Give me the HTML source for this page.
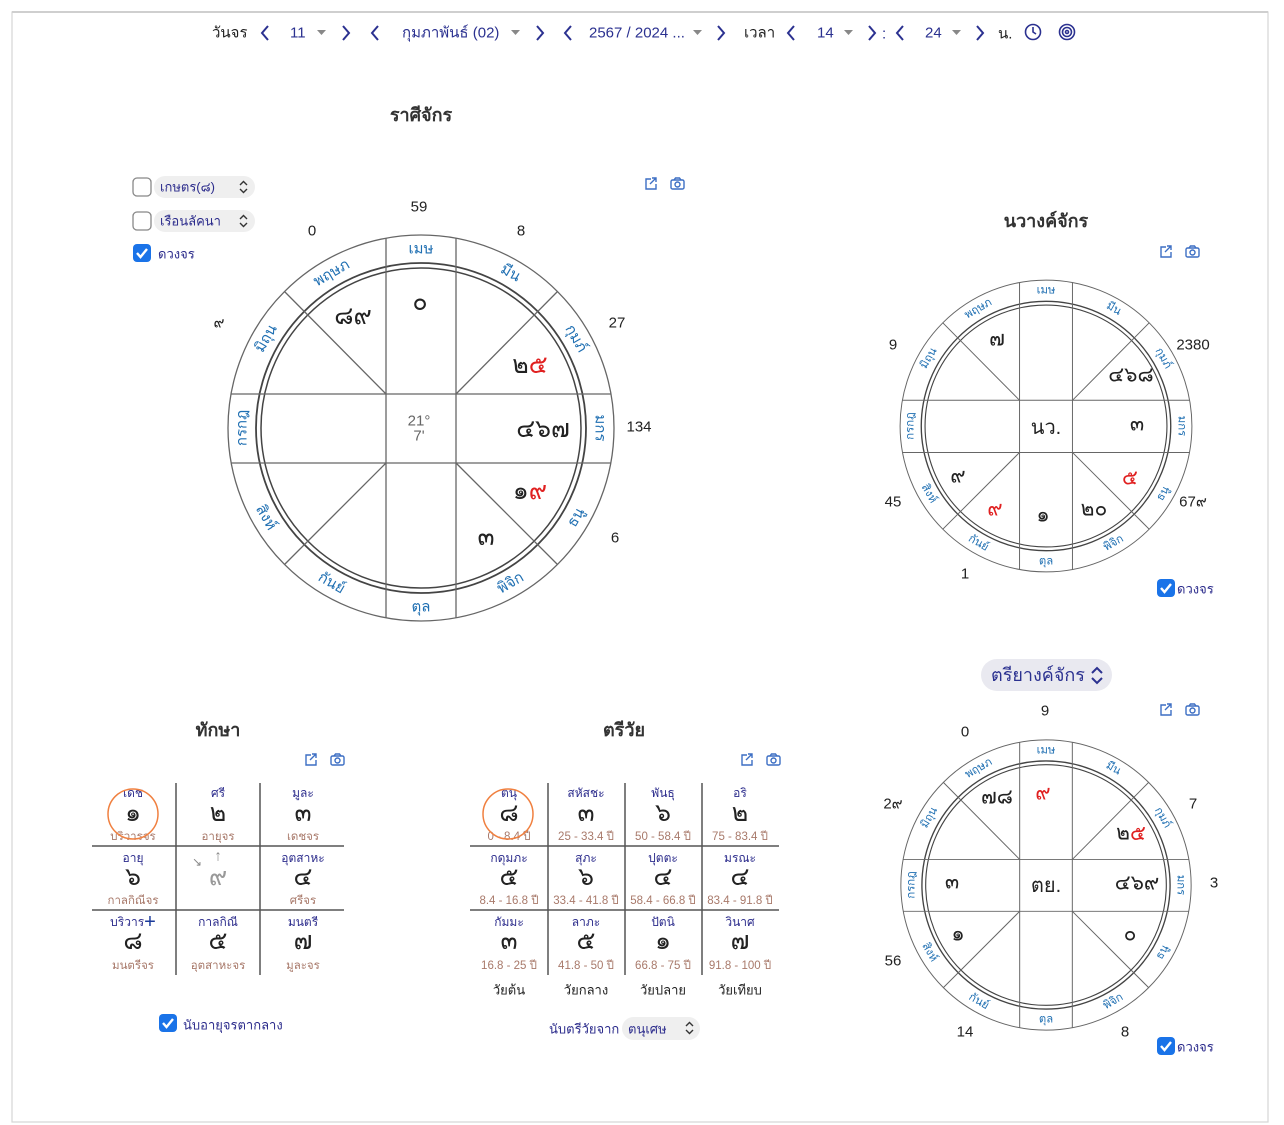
<!DOCTYPE html>
<html><head><meta charset="utf-8">
<style>
html,body{margin:0;padding:0;background:#fff;}
svg{display:block;font-family:"Liberation Sans","DejaVu Sans",sans-serif;}
.sg{font-size:15px;fill:#1f6fb2;text-anchor:middle;dominant-baseline:central}
.n{font-size:15px;fill:#222;text-anchor:middle;dominant-baseline:central}
.p{font-size:25px;fill:#222;text-anchor:middle;dominant-baseline:central}
.s{font-size:21px}
.r{fill:#e02020}
.nav{font-size:15px;fill:#2b3190;dominant-baseline:central}
.blk{fill:#222}
.ttl{font-size:18px;font-weight:bold;fill:#333;text-anchor:middle;dominant-baseline:central}
.lb{font-size:12px;fill:#2c2c8c;text-anchor:middle;dominant-baseline:central}
.bn{font-size:25px;fill:#222;text-anchor:middle;dominant-baseline:central}
.br{font-size:11.5px;fill:#a8796a;text-anchor:middle;dominant-baseline:central}
.ck{font-size:13px;fill:#2c2c8c;dominant-baseline:central}
.ch{fill:none;stroke:#2b3190;stroke-width:2}
</style></head><body>
<svg width="1284" height="1125" viewBox="0 0 1284 1125">
<defs>
<g id="frame" fill="none" stroke="#666" stroke-width="1.3">
<circle r="193"/><circle r="165" stroke="#444" stroke-width="1.8"/><circle r="160" stroke="#444" stroke-width="1.5"/>
<line x1="-35" y1="-190" x2="-35" y2="190"/><line x1="35" y1="-190" x2="35" y2="190"/>
<line x1="-190" y1="-34" x2="190" y2="-34"/><line x1="-190" y1="35" x2="190" y2="35"/>
<line x1="-35" y1="-34" x2="-136.5" y2="-136.5"/><line x1="35" y1="-34" x2="136.5" y2="-136.5"/>
<line x1="-35" y1="35" x2="-136.5" y2="136.5"/><line x1="35" y1="35" x2="136.5" y2="136.5"/>
</g>
<g id="ic" fill="none" stroke="#3d6fc4" stroke-width="1.4">
<path d="M-19 -5 h-5 v10 h10 v-5 M-18 -6 h4 v4 M-14 -6 l-6 6"/>
<rect x="1" y="-4" width="13" height="9" rx="1.5"/><path d="M4 -4 l1.5 -2 h4 l1.5 2"/><circle cx="7.5" cy="0.5" r="2.5"/>
</g>
<g id="cb"><rect x="-9" y="-9" width="18" height="18" rx="4" fill="#1a73e8"/><path d="M-5 0 l3.5 4 l6.5 -8" fill="none" stroke="#fff" stroke-width="2.4"/></g>
</defs>

<rect x="12" y="12" width="1256" height="1110" fill="none" stroke="#d6d6d6" stroke-width="1.2"/>
<line x1="12" y1="12" x2="1268" y2="12" stroke="#cfcfcf" stroke-width="2"/>

<!-- nav -->
<text class="nav blk" x="212" y="33">วันจร</text>
<path class="ch" d="M268 26 l-6 7 l6 7"/>
<text class="nav" x="290" y="33">11</text>
<path d="M317 30 h9 l-4.5 5z" fill="#888"/>
<path class="ch" d="M343 26 l6 7 l-6 7"/>
<path class="ch" d="M378 26 l-6 7 l6 7"/>
<text class="nav" x="402" y="33">กุมภาพันธ์ (02)</text>
<path d="M511 30 h9 l-4.5 5z" fill="#888"/>
<path class="ch" d="M537 26 l6 7 l-6 7"/>
<path class="ch" d="M571 26 l-6 7 l6 7"/>
<text class="nav" x="589" y="33">2567 / 2024 ...</text>
<path d="M693 30 h9 l-4.5 5z" fill="#888"/>
<path class="ch" d="M718 26 l6 7 l-6 7"/>
<text class="nav blk" x="744" y="33">เวลา</text>
<path class="ch" d="M794 26 l-6 7 l6 7"/>
<text class="nav" x="817" y="33">14</text>
<path d="M844 30 h9 l-4.5 5z" fill="#888"/>
<path class="ch" d="M869 26 l6 7 l-6 7"/>
<text class="nav" x="882" y="34">:</text>
<path class="ch" d="M903 26 l-6 7 l6 7"/>
<text class="nav" x="925" y="33">24</text>
<path d="M952 30 h9 l-4.5 5z" fill="#888"/>
<path class="ch" d="M977 26 l6 7 l-6 7"/>
<text class="nav blk" x="998" y="34">น.</text>
<g fill="none" stroke="#2b3190" stroke-width="1.6"><circle cx="1033" cy="32" r="7.5"/><path d="M1033 27 v5 l3 2"/>
<circle cx="1067" cy="32" r="7.5"/><circle cx="1067" cy="32" r="4.5"/><circle cx="1067" cy="32" r="1.5"/></g>

<!-- main chart -->
<text class="ttl" x="421" y="115">ราศีจักร</text>
<rect x="133" y="178" width="18" height="18" rx="4" fill="#fff" stroke="#888" stroke-width="1.3"/>
<rect x="154" y="176" width="101" height="22" rx="11" fill="#efefef"/>
<text class="ck" x="160" y="187">เกษตร(๘)</text>
<path d="M240 185 l3.5 -3.5 l3.5 3.5 M240 189 l3.5 3.5 l3.5 -3.5" fill="none" stroke="#333" stroke-width="1.4"/>
<rect x="133" y="212" width="18" height="18" rx="4" fill="#fff" stroke="#888" stroke-width="1.3"/>
<rect x="154" y="210" width="101" height="22" rx="11" fill="#efefef"/>
<text class="ck" x="160" y="221">เรือนลัคนา</text>
<path d="M240 219 l3.5 -3.5 l3.5 3.5 M240 223 l3.5 3.5 l3.5 -3.5" fill="none" stroke="#333" stroke-width="1.4"/>
<use href="#cb" x="142" y="253"/>
<text class="ck" x="158" y="254">ดวงจร</text>
<use href="#ic" x="670" y="184"/>

<g transform="translate(421,428)">
<use href="#frame"/>
<text class="sg" transform="translate(0,-179)">เมษ</text>
<text class="sg" transform="translate(89.5,-155) rotate(30)">มีน</text>
<text class="sg" transform="translate(155,-89.5) rotate(60)">กุมภ์</text>
<text class="sg" transform="translate(179,0) rotate(90)">มกร</text>
<text class="sg" transform="translate(155,89.5) rotate(-60)">ธนู</text>
<text class="sg" transform="translate(89.5,155) rotate(-30)">พิจิก</text>
<text class="sg" transform="translate(0,179)">ตุล</text>
<text class="sg" transform="translate(-89.5,155) rotate(30)">กันย์</text>
<text class="sg" transform="translate(-155,89.5) rotate(60)">สิงห์</text>
<text class="sg" transform="translate(-179,0) rotate(-90)">กรกฎ</text>
<text class="sg" transform="translate(-155,-89.5) rotate(-60)">มิถุน</text>
<text class="sg" transform="translate(-89.5,-155) rotate(-30)">พฤษภ</text>
</g>
<text class="n" x="419" y="207">59</text><text class="n" x="521" y="231">8</text>
<text class="n" x="617" y="323">27</text><text class="n" x="639" y="427">134</text>
<text class="n" x="615" y="538">6</text><text class="n" x="312" y="231">0</text>
<text class="n" x="219" y="323">๙</text>
<text class="p" x="353" y="316">๘๙</text><text class="p" x="420" y="302">๐</text>
<text class="p" x="530" y="365">๒<tspan class="r">๕</tspan></text>
<text class="p" x="543" y="429">๔๖๗</text>
<text class="p" x="530" y="491">๑<tspan class="r">๙</tspan></text>
<text class="p" x="486" y="537">๓</text>
<text class="n" x="419" y="421" style="fill:#666">21°</text>
<text class="n" x="419" y="436" style="fill:#666">7'</text>

<!-- navang -->
<text class="ttl" x="1046" y="221">นวางค์จักร</text>
<use href="#ic" x="1185" y="252"/>
<g transform="translate(1046,426) scale(0.756)">
<use href="#frame"/>
<text class="sg" transform="translate(0,-179)">เมษ</text>
<text class="sg" transform="translate(89.5,-155) rotate(30)">มีน</text>
<text class="sg" transform="translate(155,-89.5) rotate(60)">กุมภ์</text>
<text class="sg" transform="translate(179,0) rotate(90)">มกร</text>
<text class="sg" transform="translate(155,89.5) rotate(-60)">ธนู</text>
<text class="sg" transform="translate(89.5,155) rotate(-30)">พิจิก</text>
<text class="sg" transform="translate(0,179)">ตุล</text>
<text class="sg" transform="translate(-89.5,155) rotate(30)">กันย์</text>
<text class="sg" transform="translate(-155,89.5) rotate(60)">สิงห์</text>
<text class="sg" transform="translate(-179,0) rotate(-90)">กรกฎ</text>
<text class="sg" transform="translate(-155,-89.5) rotate(-60)">มิถุน</text>
<text class="sg" transform="translate(-89.5,-155) rotate(-30)">พฤษภ</text>
</g>
<text class="n" x="893" y="345">9</text><text class="n" x="1193" y="345">2380</text>
<text class="n" x="893" y="502">45</text><text class="n" x="1193" y="502">67๙</text>
<text class="n" x="965" y="574">1</text>
<text class="p s" x="997" y="339">๗</text>
<text class="p s" x="1131" y="375">๔๖๘</text>
<text class="p s" x="1137" y="424">๓</text>
<text class="p s" style="fill:#e02020" x="1130" y="478">๕</text>
<text class="p s" x="1094" y="509">๒๐</text>
<text class="p s" x="1043" y="515">๑</text>
<text class="p s" style="fill:#e02020" x="995" y="509">๙</text>
<text class="p s" x="958" y="476">๙</text>
<text class="p" style="font-size:20px" x="1046" y="428">นว.</text>
<use href="#cb" x="1166" y="588"/><text class="ck" x="1177" y="589">ดวงจร</text>

<!-- triyang -->
<rect x="981" y="659" width="131" height="32" rx="16" fill="#e9e9f0"/>
<text class="nav" style="font-size:18px" x="991" y="675">ตรียางค์จักร</text>
<path d="M1092 673 l5 -5 l5 5 M1092 678 l5 5 l5 -5" fill="none" stroke="#2b3190" stroke-width="2"/>
<use href="#ic" x="1185" y="710"/>
<g transform="translate(1046,885) scale(0.752)">
<use href="#frame"/>
<text class="sg" transform="translate(0,-179)">เมษ</text>
<text class="sg" transform="translate(89.5,-155) rotate(30)">มีน</text>
<text class="sg" transform="translate(155,-89.5) rotate(60)">กุมภ์</text>
<text class="sg" transform="translate(179,0) rotate(90)">มกร</text>
<text class="sg" transform="translate(155,89.5) rotate(-60)">ธนู</text>
<text class="sg" transform="translate(89.5,155) rotate(-30)">พิจิก</text>
<text class="sg" transform="translate(0,179)">ตุล</text>
<text class="sg" transform="translate(-89.5,155) rotate(30)">กันย์</text>
<text class="sg" transform="translate(-155,89.5) rotate(60)">สิงห์</text>
<text class="sg" transform="translate(-179,0) rotate(-90)">กรกฎ</text>
<text class="sg" transform="translate(-155,-89.5) rotate(-60)">มิถุน</text>
<text class="sg" transform="translate(-89.5,-155) rotate(-30)">พฤษภ</text>
</g>
<text class="n" x="1045" y="711">9</text><text class="n" x="965" y="732">0</text>
<text class="n" x="1193" y="804">7</text><text class="n" x="893" y="804">2๙</text>
<text class="n" x="1214" y="883">3</text><text class="n" x="893" y="961">56</text>
<text class="n" x="965" y="1032">14</text><text class="n" x="1125" y="1032">8</text>
<text class="p s" x="997" y="797">๗๘</text>
<text class="p s" style="fill:#e02020" x="1043" y="793">๙</text>
<text class="p s" x="1131" y="833">๒<tspan class="r">๕</tspan></text>
<text class="p s" x="1137" y="883">๔๖๙</text>
<text class="p s" x="952" y="882">๓</text>
<text class="p s" x="958" y="934">๑</text>
<text class="p s" x="1130" y="934">๐</text>
<text class="p" style="font-size:20px" x="1046" y="886">ตย.</text>
<use href="#cb" x="1166" y="1046"/><text class="ck" x="1177" y="1047">ดวงจร</text>

<!-- taksa -->
<text class="ttl" x="218" y="730">ทักษา</text>
<use href="#ic" x="330" y="760"/>
<g stroke="#555" stroke-width="1.5">
<line x1="176" y1="783" x2="176" y2="975"/><line x1="260" y1="783" x2="260" y2="975"/>
<line x1="92" y1="846" x2="344" y2="846"/><line x1="92" y1="910" x2="344" y2="910"/>
</g>
<text class="lb" x="133" y="793">เดช</text><text class="bn" x="133" y="813">๑</text><text class="br" x="133" y="837">บริวารจร</text>
<text class="lb" x="218" y="793">ศรี</text><text class="bn" x="218" y="813">๒</text><text class="br" x="218" y="837">อายุจร</text>
<text class="lb" x="303" y="793">มูละ</text><text class="bn" x="303" y="813">๓</text><text class="br" x="303" y="837">เดชจร</text>
<text class="lb" x="133" y="858">อายุ</text><text class="bn" x="133" y="877">๖</text><text class="br" x="133" y="901">กาลกิณีจร</text>
<text class="lb" x="218" y="856" style="fill:#888;font-size:15px">↑</text><text class="lb" x="197" y="862" style="fill:#888">↘</text><text class="bn" x="218" y="877" style="fill:#999">๙</text>
<text class="lb" x="303" y="858">อุตสาหะ</text><text class="bn" x="303" y="877">๔</text><text class="br" x="303" y="901">ศรีจร</text>
<text class="lb" x="133" y="922">บริวาร<tspan style="font-size:20px;fill:#1a3a9a">+</tspan></text><text class="bn" x="133" y="941">๘</text><text class="br" x="133" y="966">มนตรีจร</text>
<text class="lb" x="218" y="922">กาลกิณี</text><text class="bn" x="218" y="941">๕</text><text class="br" x="218" y="966">อุตสาหะจร</text>
<text class="lb" x="303" y="922">มนตรี</text><text class="bn" x="303" y="941">๗</text><text class="br" x="303" y="966">มูละจร</text>
<circle cx="133" cy="814" r="25" fill="none" stroke="#f08040" stroke-width="1.5"/>
<use href="#cb" x="168" y="1023"/><text class="ck" x="183" y="1025">นับอายุจรตากลาง</text>

<!-- triwai -->
<text class="ttl" x="624" y="730">ตรีวัย</text>
<use href="#ic" x="766" y="760"/>
<g stroke="#555" stroke-width="1.5">
<line x1="548" y1="783" x2="548" y2="975"/><line x1="625" y1="783" x2="625" y2="975"/><line x1="702" y1="783" x2="702" y2="975"/>
<line x1="470" y1="846" x2="779" y2="846"/><line x1="470" y1="910" x2="779" y2="910"/>
</g>
<text class="lb" x="509" y="793">ตนุ</text><text class="bn" x="509" y="813">๘</text><text class="br" x="509" y="837">0 - 8.4 ปี</text>
<text class="lb" x="586" y="793">สหัสชะ</text><text class="bn" x="586" y="813">๓</text><text class="br" x="586" y="837">25 - 33.4 ปี</text>
<text class="lb" x="663" y="793">พันธุ</text><text class="bn" x="663" y="813">๖</text><text class="br" x="663" y="837">50 - 58.4 ปี</text>
<text class="lb" x="740" y="793">อริ</text><text class="bn" x="740" y="813">๒</text><text class="br" x="740" y="837">75 - 83.4 ปี</text>
<text class="lb" x="509" y="858">กดุมภะ</text><text class="bn" x="509" y="877">๕</text><text class="br" x="509" y="901">8.4 - 16.8 ปี</text>
<text class="lb" x="586" y="858">สุภะ</text><text class="bn" x="586" y="877">๖</text><text class="br" x="586" y="901">33.4 - 41.8 ปี</text>
<text class="lb" x="663" y="858">ปุตตะ</text><text class="bn" x="663" y="877">๔</text><text class="br" x="663" y="901">58.4 - 66.8 ปี</text>
<text class="lb" x="740" y="858">มรณะ</text><text class="bn" x="740" y="877">๔</text><text class="br" x="740" y="901">83.4 - 91.8 ปี</text>
<text class="lb" x="509" y="922">กัมมะ</text><text class="bn" x="509" y="941">๓</text><text class="br" x="509" y="966">16.8 - 25 ปี</text>
<text class="lb" x="586" y="922">ลาภะ</text><text class="bn" x="586" y="941">๕</text><text class="br" x="586" y="966">41.8 - 50 ปี</text>
<text class="lb" x="663" y="922">ปัตนิ</text><text class="bn" x="663" y="941">๑</text><text class="br" x="663" y="966">66.8 - 75 ปี</text>
<text class="lb" x="740" y="922">วินาศ</text><text class="bn" x="740" y="941">๗</text><text class="br" x="740" y="966">91.8 - 100 ปี</text>
<circle cx="508" cy="814" r="25" fill="none" stroke="#f08040" stroke-width="1.5"/>
<text class="lb" style="fill:#222;font-size:13px" x="509" y="990">วัยต้น</text>
<text class="lb" style="fill:#222;font-size:13px" x="586" y="990">วัยกลาง</text>
<text class="lb" style="fill:#222;font-size:13px" x="663" y="990">วัยปลาย</text>
<text class="lb" style="fill:#222;font-size:13px" x="740" y="990">วัยเทียบ</text>
<text class="ck" x="549" y="1029">นับตรีวัยจาก</text>
<rect x="622" y="1017" width="78" height="23" rx="11.5" fill="#efefef"/>
<text class="ck" x="628" y="1029">ตนุเศษ</text>
<path d="M686 1026 l3.5 -3.5 l3.5 3.5 M686 1030 l3.5 3.5 l3.5 -3.5" fill="none" stroke="#333" stroke-width="1.4"/>
</svg>
</body></html>
